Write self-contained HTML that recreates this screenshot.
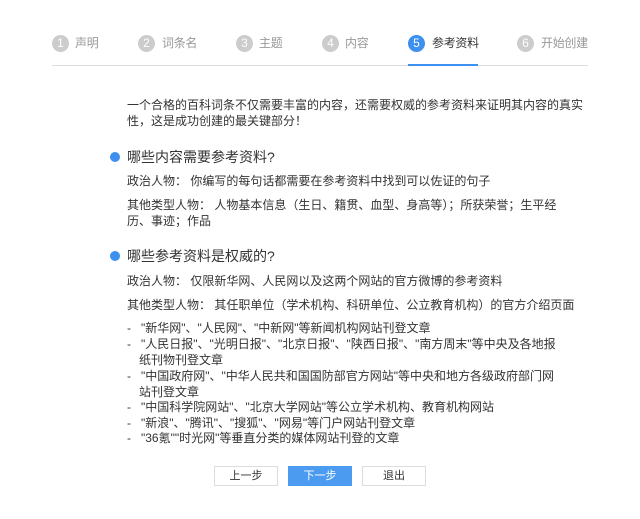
<!DOCTYPE html>
<html><head><meta charset="utf-8"><style>
*{margin:0;padding:0;box-sizing:border-box}
body{width:640px;height:519px;background:#fff;font-family:"Liberation Sans","Noto Sans CJK SC",sans-serif;color:#333;position:relative;overflow:hidden}
.a{position:absolute;white-space:nowrap}
.c{position:absolute;width:17px;height:17px;border-radius:50%;background:#ccc;color:#fff;font-size:12px;text-align:center;line-height:17px;top:35px}
.st{position:absolute;top:35px;font-size:12px;letter-spacing:-0.3px;color:#999;line-height:17px}
.t{font-size:12px;line-height:16px;color:#333}
.h{font-size:14px;line-height:18px;color:#333}
.dot{position:absolute;width:10px;height:10px;border-radius:50%;background:#3d8ff0}
.btn{position:absolute;top:466px;width:64px;height:20px;border:1px solid #ddd;font-size:11px;text-align:center;line-height:18px;color:#333;background:#fff}
</style></head><body>
<div class="c" style="left:52px">1</div><div class="st" style="left:75px">声明</div>
<div class="c" style="left:138px">2</div><div class="st" style="left:162px">词条名</div>
<div class="c" style="left:236px">3</div><div class="st" style="left:259px">主题</div>
<div class="c" style="left:322px">4</div><div class="st" style="left:345px">内容</div>
<div class="c" style="left:408px;background:#3d8ff0">5</div><div class="st" style="left:432px;color:#333">参考资料</div>
<div class="c" style="left:517px">6</div><div class="st" style="left:541px">开始创建</div>
<div class="a" style="left:52px;top:65px;width:536px;height:1px;background:#ddd"></div>
<div class="a" style="left:408px;top:64px;width:70px;height:2px;background:#3d8ff0"></div>

<div class="a t" style="left:127px;top:97px">一个合格的百科词条不仅需要丰富的内容，还需要权威的参考资料来证明其内容的真实</div>
<div class="a t" style="left:127px;top:113px">性，这是成功创建的最关键部分！</div>

<div class="dot" style="left:110px;top:152px"></div>
<div class="a h" style="left:127px;top:148px">哪些内容需要参考资料?</div>
<div class="a t" style="left:127px;top:173px">政治人物：&nbsp;你编写的每句话都需要在参考资料中找到可以佐证的句子</div>
<div class="a t" style="left:127px;top:197px">其他类型人物：&nbsp;人物基本信息（生日、籍贯、血型、身高等）；所获荣誉；生平经</div>
<div class="a t" style="left:127px;top:213px">历、事迹；作品</div>

<div class="dot" style="left:110px;top:251px"></div>
<div class="a h" style="left:127px;top:247px">哪些参考资料是权威的?</div>
<div class="a t" style="left:127px;top:273px">政治人物：&nbsp;仅限新华网、人民网以及这两个网站的官方微博的参考资料</div>
<div class="a t" style="left:127px;top:297px">其他类型人物：&nbsp;其任职单位（学术机构、科研单位、公立教育机构）的官方介绍页面</div>
<div class="a t" style="left:127px;top:320px">-&nbsp;&nbsp;&nbsp;"新华网"、"人民网"、"中新网"等新闻机构网站刊登文章</div>
<div class="a t" style="left:127px;top:336px">-&nbsp;&nbsp;&nbsp;"人民日报"、"光明日报"、"北京日报"、"陕西日报"、"南方周末"等中央及各地报</div>
<div class="a t" style="left:139px;top:352px">纸刊物刊登文章</div>
<div class="a t" style="left:127px;top:368px">-&nbsp;&nbsp;&nbsp;"中国政府网"、"中华人民共和国国防部官方网站"等中央和地方各级政府部门网</div>
<div class="a t" style="left:139px;top:384px">站刊登文章</div>
<div class="a t" style="left:127px;top:399px">-&nbsp;&nbsp;&nbsp;"中国科学院网站"、"北京大学网站"等公立学术机构、教育机构网站</div>
<div class="a t" style="left:127px;top:415px">-&nbsp;&nbsp;&nbsp;"新浪"、"腾讯"、"搜狐"、"网易"等门户网站刊登文章</div>
<div class="a t" style="left:127px;top:430px">-&nbsp;&nbsp;&nbsp;"36氪""时光网"等垂直分类的媒体网站刊登的文章</div>

<div class="btn" style="left:214px">上一步</div>
<div class="btn" style="left:288px;background:#4b9bf0;border-color:#4b9bf0;color:#fff">下一步</div>
<div class="btn" style="left:362px">退出</div>
</body></html>
